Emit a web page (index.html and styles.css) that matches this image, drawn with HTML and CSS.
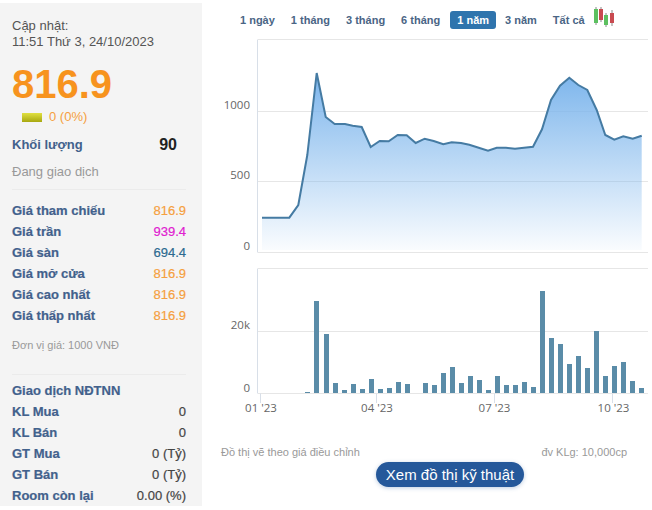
FILE: index.html
```html
<!DOCTYPE html>
<html lang="vi">
<head>
  <meta charset="UTF-8">
  <title>Biểu đồ giá</title>
  <link rel="stylesheet" href="styles.css">
</head>
<body>

  <div class="page">
    <div class="sidebar">
      <div class="updated">Cập nhật:<br>11:51 Thứ 3, 24/10/2023</div>
      <div class="price">816.9</div>
      <div class="change"><span class="change-bar"></span><span>0 (0%)</span></div>
      <div class="volume"><span class="label">Khối lượng</span><span class="volume-value">90</span></div>
      <div class="status">Đang giao dịch</div>

      <div class="section">
        <div class="row"><span class="label">Giá tham chiếu</span><span class="val-ref">816.9</span></div>
        <div class="row"><span class="label">Giá trần</span><span class="val-ceil">939.4</span></div>
        <div class="row"><span class="label">Giá sàn</span><span class="val-floor">694.4</span></div>
        <div class="row"><span class="label">Giá mở cửa</span><span class="val-ref">816.9</span></div>
        <div class="row"><span class="label">Giá cao nhất</span><span class="val-ref">816.9</span></div>
        <div class="row"><span class="label">Giá thấp nhất</span><span class="val-ref">816.9</span></div>
        <div class="unit">Đơn vị giá: 1000 VNĐ</div>
      </div>

      <div class="section foreign">
        <div class="row"><span class="label">Giao dịch NĐTNN</span></div>
        <div class="row"><span class="label">KL Mua</span><span class="val-plain">0</span></div>
        <div class="row"><span class="label">KL Bán</span><span class="val-plain">0</span></div>
        <div class="row"><span class="label">GT Mua</span><span class="val-plain">0 (Tỷ)</span></div>
        <div class="row"><span class="label">GT Bán</span><span class="val-plain">0 (Tỷ)</span></div>
        <div class="row"><span class="label">Room còn lại</span><span class="val-plain">0.00 (%)</span></div>
      </div>
    </div>

    <div class="main">
      <div class="tabs">
        <a class="tab">1 ngày</a>
        <a class="tab">1 tháng</a>
        <a class="tab">3 tháng</a>
        <a class="tab">6 tháng</a>
        <a class="tab active">1 năm</a>
        <a class="tab">3 năm</a>
        <a class="tab">Tất cả</a>
        <svg class="candles" width="22" height="20" viewBox="0 0 22 20">
          <path d="M3 0v18M8 0v15M13 6v14M19 3v16" stroke="#888" stroke-width="1"/>
          <rect x="1" y="2" width="4" height="14" fill="#5cc060"/>
          <rect x="6" y="2" width="4" height="11" fill="#c84a50"/>
          <rect x="11" y="8" width="4" height="10" fill="#5cc060"/>
          <rect x="17" y="6" width="4" height="10" fill="#c84a50"/>
        </svg>
      </div>

      <svg class="chart" width="450" height="380" viewBox="202 35 450 380">
        <defs>
          <linearGradient id="area" x1="0" y1="73" x2="0" y2="250" gradientUnits="userSpaceOnUse">
            <stop offset="0" stop-color="#7cb5ec"/>
            <stop offset="1" stop-color="#7cb5ec" stop-opacity="0.04"/>
          </linearGradient>
        </defs>

        <!-- price -->
        <path class="grid" d="M258 39.500H648M258 111.500H648M258 181.500H648M258 252.500H648"/>
        <path class="axis" d="M257.500 39.500V252.500"/>
        <polygon fill="url(#area)" points="262,250 262,217.700 289.300,217.700 298.300,205 307.300,155 316.700,73 325.700,117 334.700,124 345,124 352.700,125.700 361.700,127 370.700,147 379.700,141 388.700,141.300 397.700,135 406.700,135.300 415.700,143 424.700,138.700 433.700,141 443.300,144.300 451.700,142.300 461,143 469.300,144.700 478.700,147.700 488,150.700 496.700,147.700 506,147.700 515,148.700 524,147.700 533,146.700 542,129.300 551,100 560,85.700 569.300,77.700 578.300,85 587.300,90 596.700,110 605.300,135 614.300,139.700 623.300,136.300 632.700,138.700 641.700,135.700 641.700,250"/>
        <polyline class="price-line" points="262,217.700 289.300,217.700 298.300,205 307.300,155 316.700,73 325.700,117 334.700,124 345,124 352.700,125.700 361.700,127 370.700,147 379.700,141 388.700,141.300 397.700,135 406.700,135.300 415.700,143 424.700,138.700 433.700,141 443.300,144.300 451.700,142.300 461,143 469.300,144.700 478.700,147.700 488,150.700 496.700,147.700 506,147.700 515,148.700 524,147.700 533,146.700 542,129.300 551,100 560,85.700 569.300,77.700 578.300,85 587.300,90 596.700,110 605.300,135 614.300,139.700 623.300,136.300 632.700,138.700 641.700,135.700"/>
        <text class="tick" x="250" y="109" text-anchor="end">1000</text>
        <text class="tick" x="250" y="179" text-anchor="end">500</text>
        <text class="tick" x="250" y="250" text-anchor="end">0</text>

        <!-- volume -->
        <path class="grid" d="M258 268.500H648M258 331.500H648M258 393.500H648"/>
        <path class="axis" d="M257.500 268.500V393.500M260.500 393.500V403M376.500 393.500V403M494.500 393.500V403M612.500 393.500V403"/>
        <g class="bars">
          <rect x="305" y="392" width="5" height="1"/>
          <rect x="314" y="301" width="5" height="92"/>
          <rect x="324" y="334" width="5" height="59"/>
          <rect x="333" y="383" width="5" height="10"/>
          <rect x="342" y="390" width="5" height="3"/>
          <rect x="351" y="384" width="5" height="9"/>
          <rect x="360" y="389" width="5" height="4"/>
          <rect x="369" y="379" width="5" height="14"/>
          <rect x="378" y="389" width="5" height="4"/>
          <rect x="387" y="388" width="5" height="5"/>
          <rect x="396" y="382" width="5" height="11"/>
          <rect x="405" y="384" width="5" height="9"/>
          <rect x="423" y="383" width="5" height="10"/>
          <rect x="432" y="385" width="5" height="8"/>
          <rect x="441" y="373" width="5" height="20"/>
          <rect x="450" y="367" width="5" height="26"/>
          <rect x="459" y="383" width="5" height="10"/>
          <rect x="468" y="376" width="5" height="17"/>
          <rect x="477" y="380" width="5" height="13"/>
          <rect x="486" y="390" width="5" height="3"/>
          <rect x="495" y="376" width="5" height="17"/>
          <rect x="504" y="385" width="5" height="8"/>
          <rect x="513" y="385" width="5" height="8"/>
          <rect x="522" y="382" width="5" height="11"/>
          <rect x="531" y="387" width="5" height="6"/>
          <rect x="540" y="291" width="5" height="102"/>
          <rect x="549" y="338" width="5" height="55"/>
          <rect x="558" y="344" width="5" height="49"/>
          <rect x="567" y="364" width="5" height="29"/>
          <rect x="576" y="356" width="5" height="37"/>
          <rect x="585" y="368" width="5" height="25"/>
          <rect x="594" y="331" width="5" height="62"/>
          <rect x="603" y="376" width="5" height="17"/>
          <rect x="612" y="366" width="5" height="27"/>
          <rect x="621" y="362" width="5" height="31"/>
          <rect x="630" y="381" width="5" height="12"/>
          <rect x="639" y="388" width="5" height="5"/>
        </g>
        <text class="tick" x="250" y="329" text-anchor="end">20k</text>
        <text class="tick" x="250" y="392" text-anchor="end">0</text>
        <text class="tick" x="261" y="412" text-anchor="middle">01 '23</text>
        <text class="tick" x="377" y="412" text-anchor="middle">04 '23</text>
        <text class="tick" x="494.500" y="412" text-anchor="middle">07 '23</text>
        <text class="tick" x="613.500" y="412" text-anchor="middle">10 '23</text>
      </svg>

      <div class="notes">
        <span>Đồ thị vẽ theo giá điều chỉnh</span>
        <span>đv KLg: 10,000cp</span>
      </div>
      <div class="actions">
        <a class="btn-chart">Xem đồ thị kỹ thuật</a>
      </div>
    </div>
  </div>

</body>
</html>
```

FILE: styles.css
```css
body {
  margin: 0;
  font-family: "Liberation Sans", Arial, sans-serif;
  font-size: 13px;
  background: white;
}

.page {
  display: flex;
  align-items: flex-start;
}

/* left column */
.sidebar {
  width: 174px;
  height: 485px;
  margin-top: 3px;
  padding: 15px 16px 3px 12px;
  background: #f4f4f4;
  color: #555;
}

.updated {
  line-height: 16px;
}

.price {
  margin-top: 11px;
  font-size: 40px;
  line-height: 46px;
  font-weight: bold;
  color: #f7931e;
}

.change {
  display: flex;
  align-items: center;
  gap: 7px;
  margin: 2px 0 0 10px;
  line-height: 16px;
  color: #f5a040;
}

.change-bar {
  width: 20px;
  height: 9px;
  background: linear-gradient(#e0e040, #a8a810);
}

.label {
  font-weight: bold;
  color: #42618c;
}

.volume {
  display: flex;
  justify-content: space-between;
  align-items: center;
  margin-top: 10px;
  padding-right: 9px;
  line-height: 20px;
}

.volume-value {
  font-size: 16px;
  font-weight: bold;
  color: #222;
}

.status {
  margin-top: 7px;
  line-height: 20px;
  color: #999;
}

.section {
  margin-top: 7px;
  padding-top: 10px;
  border-top: 1px solid #ebebeb;
}

.row {
  display: flex;
  justify-content: space-between;
  line-height: 21px;
  -webkit-text-stroke: 0.2px;
}

.val-ref {
  color: #f5a040;
}

.val-ceil {
  color: #e020d0;
}

.val-floor {
  color: #2c6a90;
}

.val-plain {
  color: #444;
}

.unit {
  margin-top: 11px;
  font-size: 11px;
  line-height: 16px;
  color: #999;
}

.foreign {
  margin-top: 21px;
  padding-top: 5px;
}

/* chart column */
.main {
  width: 450px;
}

.tabs {
  display: flex;
  align-items: flex-start;
  gap: 2px;
  height: 24px;
  padding: 11px 0 0 31px;
}

.tab {
  padding: 0 7px;
  font-size: 11px;
  line-height: 18px;
  font-weight: bold;
  color: #4a6585;
  border-radius: 3px;
}

.tab.active {
  margin-left: 1px;
  background: #2f74ad;
  color: white;
}

.candles {
  margin: -4px 0 0 -1px;
}

.chart {
  display: block;
}

.grid {
  fill: none;
  stroke: #e6e6e6;
  stroke-width: 1;
}

.axis {
  fill: none;
  stroke: #d8dfe8;
  stroke-width: 1;
}

.price-line {
  fill: none;
  stroke: #457ba3;
  stroke-width: 2;
}

.bars {
  fill: #5a8ca8;
}

.tick {
  font-family: "Open Sans", sans-serif;
  font-size: 11.5px;
  fill: #666;
}

.notes {
  display: flex;
  justify-content: space-between;
  margin-top: 30px;
  padding: 0 25px 0 19px;
  font-size: 11px;
  line-height: 14px;
  color: #999;
}

.actions {
  margin: 3px 0 0 174px;
}

.btn-chart {
  display: inline-block;
  width: 148px;
  text-align: center;
  font-size: 15px;
  line-height: 25px;
  color: white;
  background: #25589a;
  border-radius: 13px;
  box-shadow: 0 1px 4px rgba(37,88,154,0.3);
}
```
